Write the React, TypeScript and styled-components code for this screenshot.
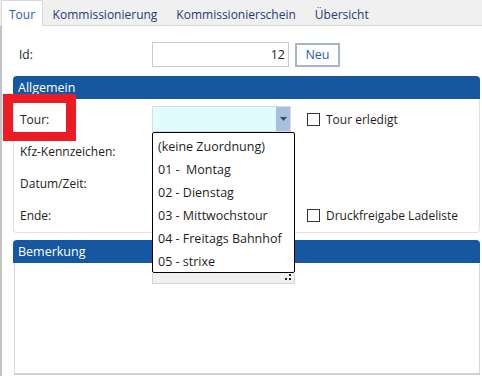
import React, { FC } from 'react'
import styled, { createGlobalStyle } from 'styled-components'

const TABS = ['Tour', 'Kommissionierung', 'Kommissionierschein', 'Übersicht']

const TOUR_OPTIONS = [
  '(keine Zuordnung)',
  '01 -  Montag',
  '02 - Dienstag',
  '03 - Mittwochstour',
  '04 - Freitags Bahnhof',
  '05 - strixe',
]

const GlobalStyle = createGlobalStyle`
  html, body {
    margin: 0;
    padding: 0;
    background: #ffffff;
  }
  body {
    font-family: 'Open Sans', 'Noto Sans', sans-serif;
    font-size: 12px;
    color: #222222;
  }
`

const App: FC = () => (
  <Root>
    <GlobalStyle />
    <TabBar>
      {TABS.map((tab, i) => (
        <Tab key={tab} active={i === 0}>
          {tab}
        </Tab>
      ))}
    </TabBar>

    <Content>
      <IdRow>
        <Label>Id:</Label>
        <TextField>12</TextField>
        <Button>Neu</Button>
      </IdRow>

      <Panel>
        <PanelHeader>Allgemein</PanelHeader>
        <PanelBody>
          <FormRow>
            <Label>Tour:</Label>
            <Combo>
              <ComboArrow>
                <svg width="7" height="4" viewBox="0 0 7 4">
                  <path d="M0 0h7L3.5 4z" fill="#4a4a4a" />
                </svg>
              </ComboArrow>
              <DropList>
                {TOUR_OPTIONS.map((option) => (
                  <DropItem key={option}>{option}</DropItem>
                ))}
              </DropList>
              <Grip>
                <svg width="8" height="8" viewBox="0 0 8 8">
                  <rect x="5" y="0" width="2" height="2" fill="#222" />
                  <rect x="5" y="4" width="2" height="2" fill="#222" />
                  <rect x="1" y="4" width="2" height="2" fill="#222" />
                </svg>
              </Grip>
            </Combo>
            <Check>
              <Box />
              Tour erledigt
            </Check>
          </FormRow>
          <FormRow>
            <Label>Kfz-Kennzeichen:</Label>
          </FormRow>
          <FormRow>
            <Label>Datum/Zeit:</Label>
          </FormRow>
          <FormRow>
            <Label>Ende:</Label>
            <Spacer />
            <Check>
              <Box />
              Druckfreigabe Ladeliste
            </Check>
          </FormRow>
        </PanelBody>
      </Panel>

      <Panel>
        <PanelHeader>Bemerkung</PanelHeader>
        <NoteBody />
      </Panel>
    </Content>

    <Highlight />
  </Root>
)

const Root = styled.div`
  position: relative;
  width: 482px;
  height: 376px;
  overflow: hidden;
  background: #ffffff;
`

const TabBar = styled.div`
  display: flex;
  height: 25px;
  background: #f0f0f0;
  border-bottom: 1px solid #d9d9d9;
`

const Tab = styled.div<{ active?: boolean }>`
  display: flex;
  align-items: center;
  height: ${(p) => (p.active ? '26px' : '25px')};
  padding: 2px ${(p) => (p.active ? '7px' : '8.5px')} 0;
  margin-left: ${(p) => (p.active ? '1px' : '0')};
  box-sizing: border-box;
  background: ${(p) => (p.active ? '#ffffff' : 'transparent')};
  border: 1px solid ${(p) => (p.active ? '#d9d9d9' : 'transparent')};
  border-bottom: none;
  color: ${(p) => (p.active ? '#1f5cc0' : '#253a7a')};
  font-size: 12px;
`

const Content = styled.div`
  height: 350px;
  box-sizing: border-box;
  border-left: 2px solid #c4c4c4;
  padding: 16px 2px 0 11px;
`

const IdRow = styled.div`
  display: flex;
  align-items: center;
  height: 25px;
  padding-left: 6px;
  margin-bottom: 9px;
`

const Label = styled.div`
  width: 133px;
  flex: none;
  color: #222222;
`

const TextField = styled.div`
  width: 137px;
  height: 25px;
  box-sizing: border-box;
  border: 1px solid #cccccc;
  text-align: right;
  padding: 0 3px;
  line-height: 23px;
  font-size: 12.5px;
`

const Button = styled.div`
  margin-left: 6px;
  width: 45px;
  height: 24px;
  box-sizing: border-box;
  border: 2px solid #a9b4c4;
  display: flex;
  align-items: center;
  justify-content: center;
  color: #2c5ab0;
  font-size: 12.5px;
`

const Panel = styled.div`
  margin-bottom: 7px;
`

const PanelHeader = styled.div`
  height: 23px;
  box-sizing: border-box;
  background: #1557a0;
  border-radius: 4px 4px 0 0;
  color: #ffffff;
  padding: 3px 0 0 5px;
  font-size: 12.5px;
`

const PanelBody = styled.div`
  display: flex;
  flex-direction: column;
  gap: 6px;
  padding: 7px 0 4px 6px;
  border: 1px solid #e0e0e0;
  border-top: none;
  border-radius: 0 0 4px 4px;

  ${Label} {
    width: 132px;
  }
`

const FormRow = styled.div`
  display: flex;
  align-items: center;
  height: 26px;
`

const Combo = styled.div`
  position: relative;
  width: 139px;
  height: 26px;
  box-sizing: border-box;
  background: #e0fcfc;
  border: 1px solid #d6dde6;
`

const ComboArrow = styled.div`
  position: absolute;
  top: 0;
  right: 0;
  width: 14px;
  height: 24px;
  background: #a8bfe2;
  display: flex;
  align-items: center;
  justify-content: center;
`

const DropList = styled.div`
  position: absolute;
  top: 25px;
  left: -1px;
  width: 143px;
  height: 141px;
  box-sizing: border-box;
  background: #ffffff;
  border: 1px solid #000000;
  border-radius: 2px;
  padding-top: 2px;
  z-index: 2;
`

const DropItem = styled.div`
  height: 23px;
  line-height: 23px;
  padding-left: 5px;
  white-space: pre;
  color: #1e1e1e;
  font-size: 12.5px;
`

const Grip = styled.div`
  position: absolute;
  top: 166px;
  left: -1px;
  width: 143px;
  height: 11px;
  box-sizing: border-box;
  background: #f0f0f0;
  border: 1px solid #d4d4d4;
  border-top: none;
  display: flex;
  justify-content: flex-end;
  align-items: flex-end;
  padding: 0 2px 1px 0;
  z-index: 2;
`

const Spacer = styled.div`
  width: 139px;
  flex: none;
`

const Check = styled.label`
  display: flex;
  align-items: center;
  gap: 6px;
  margin-left: 16px;
  color: #1e1e1e;
  font-size: 12px;
`

const Box = styled.span`
  width: 13px;
  height: 13px;
  box-sizing: border-box;
  border: 1px solid #333333;
  background: #ffffff;
`

const NoteBody = styled.div`
  height: 110px;
  margin-left: 1px;
  border: 1px solid #d8d8d8;
  border-top: none;
  border-bottom: 2px solid #d0d0d0;
`

const Highlight = styled.div`
  position: absolute;
  left: 3px;
  top: 94px;
  width: 73px;
  height: 47px;
  box-sizing: border-box;
  border: 10px solid #ed1c24;
  border-top-width: 9px;
  border-bottom-width: 9px;
`

export default App
